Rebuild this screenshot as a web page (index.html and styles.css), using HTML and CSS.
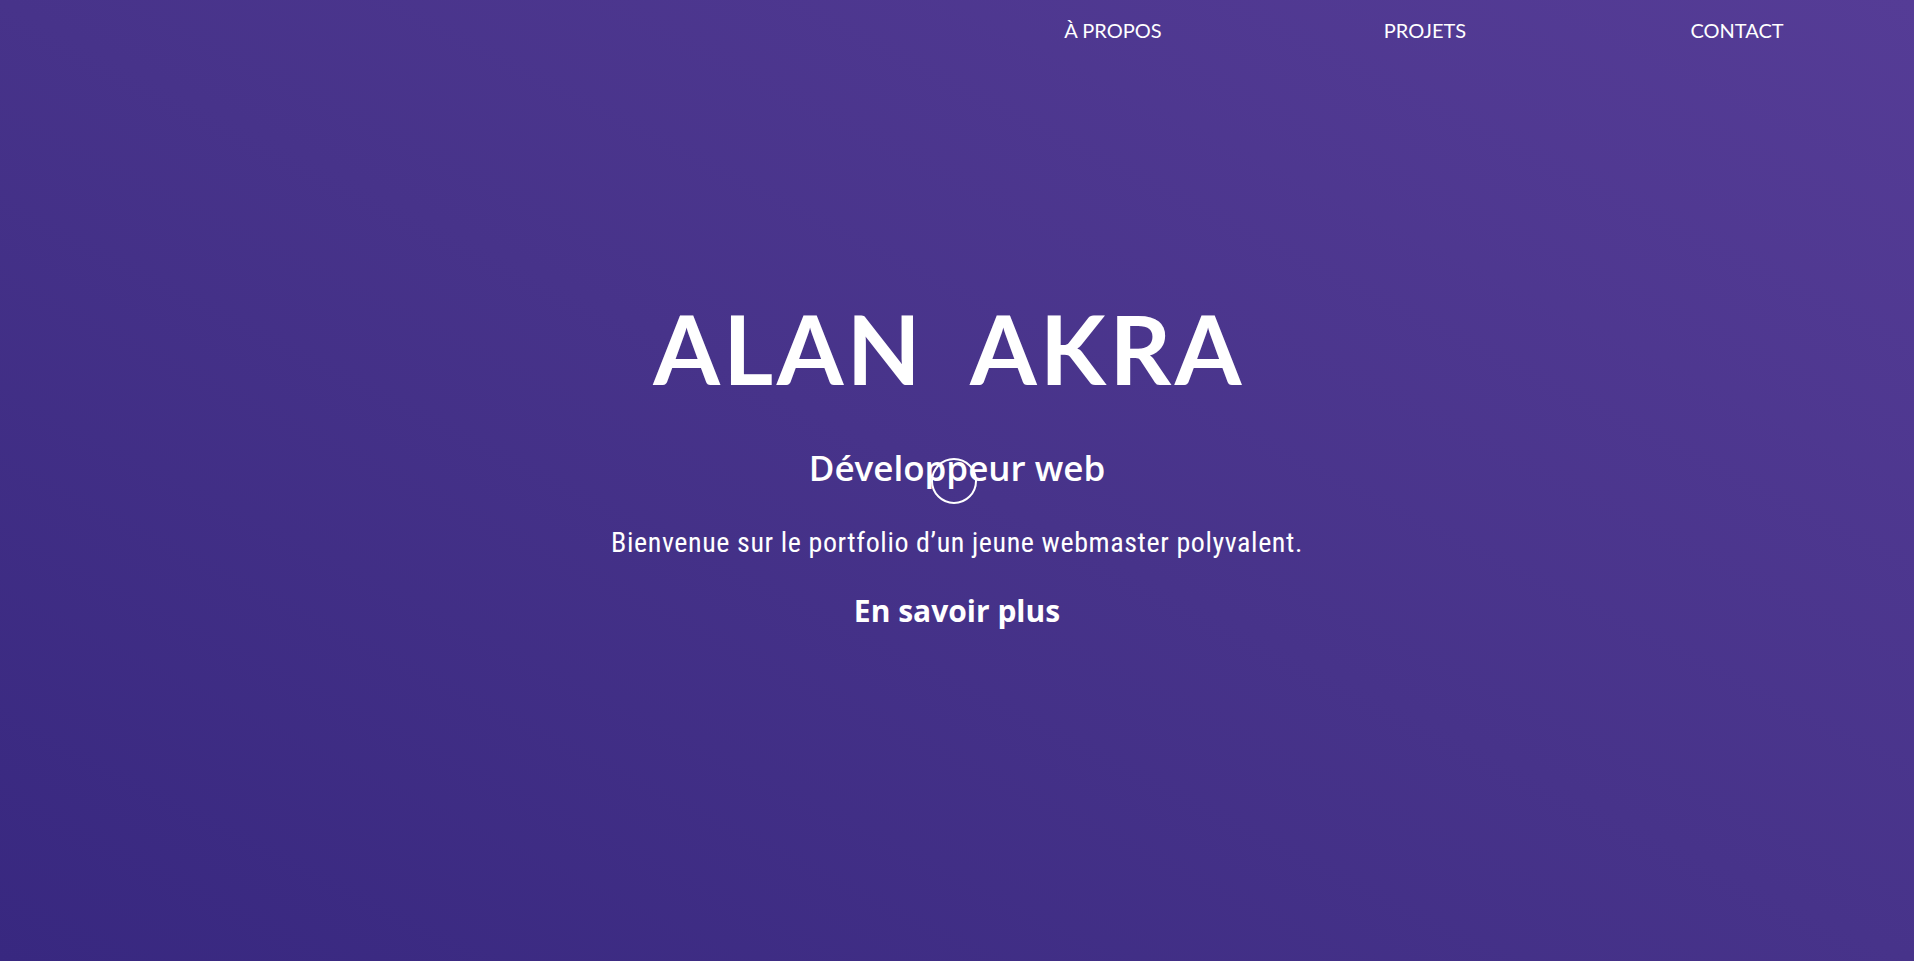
FILE: index.html
```html
<!DOCTYPE html>
<html lang="fr">
<head>
<meta charset="utf-8">
<title>Alan Akra — Développeur web</title>
<link rel="stylesheet" href="styles.css">
</head>
<body>
<div class="page">
  <header class="header">
    <nav class="nav">
      <ul class="nav-list">
        <li class="nav-item"><a class="nav-link" href="#apropos">À PROPOS</a></li>
        <li class="nav-item"><a class="nav-link" href="#projets">PROJETS</a></li>
        <li class="nav-item"><a class="nav-link" href="#contact">CONTACT</a></li>
      </ul>
    </nav>
  </header>
  <main class="hero">
    <h1 class="hero-title">ALAN AKRA</h1>
    <h2 class="hero-subtitle">Développeur web</h2>
    <p class="hero-text">Bienvenue sur le portfolio d’un jeune webmaster polyvalent.</p>
    <a class="hero-link" href="#apropos">En savoir plus</a>
  </main>
  <div class="cursor"></div>
</div>
</body>
</html>
```

FILE: styles.css
```css
* { box-sizing: border-box; }

html, body {
  margin: 0;
  padding: 0;
  height: 100%;
}

body {
  background: linear-gradient(to top right, #382880 0%, #47338a 50%, #553c96 100%);
  color: #ffffff;
  font-family: "Lato", "Liberation Sans", sans-serif;
  overflow: hidden;
}

.page {
  position: relative;
  min-height: 100vh;
}

.header {
  padding-top: 18px;
}

.nav-list {
  list-style: none;
  margin: 0 0 0 50%;
  padding: 0 21px 0 0;
  display: flex;
}

.nav-item {
  flex: 1;
  text-align: center;
  font-size: 20px;
  line-height: 24px;
}

.nav-link {
  color: #ffffff;
  text-decoration: none;
}

.hero {
  display: flex;
  flex-direction: column;
  align-items: center;
  padding-top: 258px;
}

.hero-title {
  margin: 0;
  font-family: "Lato", sans-serif;
  font-weight: 700;
  font-size: 96px;
  line-height: 96px;
  letter-spacing: 3.5px;
  word-spacing: 22px;
  padding-right: 16px;
}

.hero-subtitle {
  margin: 52px 0 0;
  font-family: "Open Sans", "Noto Sans", sans-serif;
  font-weight: 600;
  font-size: 35px;
  line-height: 40px;
}

.hero-text {
  margin: 40px 0 0;
  font-family: "Roboto Condensed", "Liberation Sans Narrow", "Liberation Sans", sans-serif;
  font-size: 28px;
  line-height: 30px;
  letter-spacing: 0.6px;
}

.hero-link {
  margin-top: 38px;
  font-family: "Open Sans", "Noto Sans", sans-serif;
  font-weight: 700;
  font-size: 30px;
  line-height: 30px;
  color: #ffffff;
  text-decoration: none;
}

.cursor {
  position: absolute;
  left: 931px;
  top: 458px;
  width: 46px;
  height: 46px;
  border: 2px solid #ffffff;
  border-radius: 50%;
  pointer-events: none;
}
```
